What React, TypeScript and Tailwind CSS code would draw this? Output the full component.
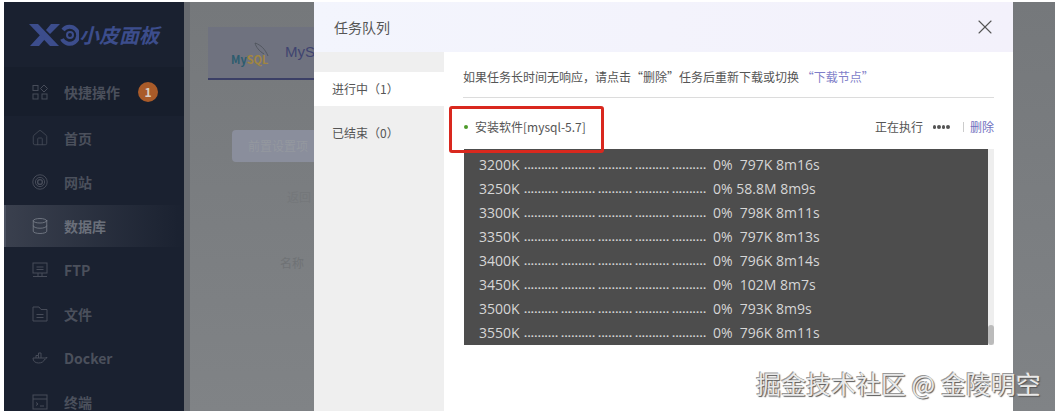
import { Database, Home, X } from 'lucide-react';
import type { ReactNode } from 'react';

const CJK = 'font-["Noto_Sans_CJK_SC","Noto_Sans",sans-serif]';

const iconClass = 'w-4 h-4 text-[#474c59]';

const QuickIcon = () => (
  <svg viewBox="0 0 16 16" className={iconClass} fill="none" stroke="currentColor" strokeWidth="1">
    <rect x="1" y="1.5" width="5" height="5" />
    <path d="M12 1l3.5 3.5L12 8 8.500 4.500z" />
    <rect x="1" y="10" width="5" height="5" />
    <rect x="10" y="10" width="5" height="5" />
  </svg>
);

const SiteIcon = () => (
  <svg viewBox="0 0 16 16" className={iconClass} fill="none" stroke="currentColor" strokeWidth="1">
    <circle cx="8" cy="8" r="7.2" />
    <circle cx="8" cy="8" r="4.6" />
    <circle cx="8" cy="8" r="2.4" strokeWidth="1.4" />
  </svg>
);

const FtpIcon = () => (
  <svg viewBox="0 0 16 16" className={iconClass} fill="none" stroke="currentColor" strokeWidth="1">
    <rect x="1" y="1" width="14" height="10" />
    <path d="M4.5 5h7M4.5 7.5h7" />
    <path d="M1 14.5h14M6 11v3.5M10 11v3.5" />
  </svg>
);

const FileIcon = () => (
  <svg viewBox="0 0 16 16" className={iconClass} fill="none" stroke="currentColor" strokeWidth="1">
    <path d="M1 1h6l2 2.5h6V15H1z" />
    <path d="M4.5 8.5h7M4.5 11.5h7" />
  </svg>
);

const DockerIcon = () => (
  <svg viewBox="0 0 16 16" className={iconClass} fill="none" stroke="currentColor" strokeWidth="1">
    <path d="M1 8h11.5c.8 0 1.500-.4 2.500-.6-.4 1.200-1.300 1.700-2.300 1.800C11.800 11.800 9.500 13 6.500 13 3 13 1 11 1 8z" />
    <path d="M4 8V5.500h2.500V8M6.500 5.500V3H9v5" />
  </svg>
);

const TerminalIcon = () => (
  <svg viewBox="0 0 16 16" className={iconClass} fill="none" stroke="currentColor" strokeWidth="1">
    <rect x="1" y="1" width="14" height="14" />
    <path d="M1 5h14M4 8.500l2 1.500-2 1.500M8 12h4" />
  </svg>
);

const LOG_LINES = [
  ['3200K', '0%  797K 8m16s'],
  ['3250K', '0% 58.8M 8m9s'],
  ['3300K', '0%  798K 8m11s'],
  ['3350K', '0%  797K 8m13s'],
  ['3400K', '0%  796K 8m14s'],
  ['3450K', '0%  102M 8m7s'],
  ['3500K', '0%  793K 8m9s'],
  ['3550K', '0%  796K 8m11s'],
];

const DOTS = '..........';

function NavItem({ icon, label, active, rowClass, children }: { icon: ReactNode; label: string; active?: boolean; rowClass: string; children?: ReactNode }) {
  return (
    <div className={`flex items-center gap-[16px] pl-[28px] ${rowClass} ${active ? 'border-l-2 border-[#4b5160] !pl-[26px] bg-gradient-to-r from-[#3a404e] to-[#1a2130]' : ''}`}>
      {icon}
      <span className={`text-sm font-bold ${active ? 'text-[#6a6f7a]' : 'text-[#4b505c]'}`}>{label}</span>
      {children}
    </div>
  );
}

export default function App() {
  return (
    <div className={`relative w-[1055px] h-[411px] overflow-hidden bg-white pt-[2px] pl-[4px] flex ${CJK}`}>
      {/* sidebar */}
      <aside className="w-[180px] h-full shrink-0 bg-[#1a2130] flex flex-col overflow-hidden">
        <div className="h-[65px] shrink-0 bg-[#1a2130] flex items-center pl-[25px]">
          <svg viewBox="0 0 50 24" className="w-[50px] h-[24px] text-[#3c4d8c]" fill="none" stroke="currentColor">
            <path d="M0 1h9l21 22h-9z" fill="currentColor" stroke="none" />
            <path d="M1 23h9l6-7-4-5zM31 1h-9l-5 6 4 4z" fill="currentColor" stroke="none" />
            <path d="M34 7a8.500 8.500 0 1 1-1 9" strokeWidth="4" />
            <circle cx="41" cy="12" r="3" strokeWidth="2" />
          </svg>
          <span className="text-[20px] leading-none font-bold italic text-[#3c4d8c] whitespace-nowrap">小皮面板</span>
        </div>
        <NavItem icon={<QuickIcon />} label="快捷操作" rowClass="h-[49px] shrink-0 bg-[#171e2c]">
          <span className="w-5 h-5 ml-[2px] rounded-full bg-[#a95b29] text-[#d9cfc6] text-xs font-bold flex items-center justify-center">1</span>
        </NavItem>
        <NavItem icon={<Home className="w-[18px] h-[18px] -mx-[1px] text-[#474c59]" strokeWidth={1.1} />} label="首页" rowClass="h-[44px] shrink-0" />
        <NavItem icon={<SiteIcon />} label="网站" rowClass="h-[44px] shrink-0" />
        <NavItem icon={<Database className="w-[18px] h-[18px] -mx-[1px] text-[#7a7f8a]" strokeWidth={1.1} />} label="数据库" active rowClass="h-[42px] my-[1px] shrink-0" />
        <NavItem icon={<FtpIcon />} label="FTP" rowClass="h-[44px] shrink-0" />
        <NavItem icon={<FileIcon />} label="文件" rowClass="h-[44px] shrink-0" />
        <NavItem icon={<DockerIcon />} label="Docker" rowClass="h-[44px] shrink-0" />
        <NavItem icon={<TerminalIcon />} label="终端" rowClass="h-[44px] shrink-0" />
      </aside>

      {/* page behind the mask */}
      <div className="w-[6px] shrink-0 bg-[#686b70]" />
      <main className="flex-1 bg-gradient-to-b from-[#75787b] to-[#808386] pl-[18px] pt-[25px] min-w-0 overflow-hidden">
        <div className="w-[300px] h-[53px] bg-[#6f727f] border-b-2 border-[#3b3f66] flex items-center pl-[23px] gap-[14px]">
          <div className="relative w-[40px] h-[24px]">
            <svg viewBox="0 0 40 24" className="absolute inset-0 text-[#4b5058]" fill="none" stroke="currentColor" strokeWidth="0.8">
              <path d="M24 2c6 2 10 6 13 13M24 2c1 4 4 8 9 11" />
            </svg>
            <span className="absolute left-0 bottom-0 text-[11px] leading-none font-bold text-[#2c5c6e]">My<span className="text-[#a1863f]">SQL</span></span>
          </div>
          <span className="text-[15px] text-[#3f4470] font-['Liberation_Sans',sans-serif]">MySQL</span>
        </div>
        <div className="ml-[24px] mt-[50px] w-[200px] h-[32px] rounded bg-[#8a8e9c] pl-[16px] text-xs leading-[32px] text-[#94989f]">前置设置项</div>
        <p className="ml-[79px] mt-[27px] text-xs text-[#74777a]">返回</p>
        <p className="ml-[72px] mt-[50px] text-xs text-[#6f7275]">名称</p>
      </main>

      {/* task dialog */}
      <section className="absolute left-[314px] top-[2px] bottom-0 w-[699px] bg-white flex flex-col">
        <header className="h-[50px] shrink-0 bg-gradient-to-r from-[#f3f5fd] to-[#f3f1fb] flex items-center justify-between pl-[20px] pr-[16px]">
          <h2 className="text-sm text-[#555]">任务队列</h2>
          <X className="w-6 h-6 text-[#555]" strokeWidth={1.1} />
        </header>
        <div className="flex-1 flex min-h-0">
          <nav className="w-[130px] shrink-0 bg-[#efefef] pt-[20px] text-xs text-[#555]">
            <div className="h-[34px] bg-white pl-[18px] leading-[34px]">进行中（1）</div>
            <div className="h-[54px] pl-[18px] leading-[54px]">已结束（0）</div>
          </nav>
          <div className="flex-1 min-w-0 pl-[19px] pr-[19px]">
            <p className="h-[46px] pt-[16px] border-b border-[#dcdcdc] text-xs leading-[18px] text-[#555] whitespace-nowrap">
              如果任务长时间无响应，请点击“删除”任务后重新下载或切换 <span className="text-[#7f7fc9]">“下载节点”</span>
            </p>
            <div className="h-[51px] pt-[7px] flex items-center text-xs text-[#555]">
              <span className="w-1 h-1 rounded-full bg-[#4d9a2a] mr-[7px] ml-px" />
              <span>安装软件[mysql-5.7]</span>
              <span className="ml-auto">正在执行</span>
              <span className="ml-[10px] flex gap-px">
                {[0, 1, 2, 3].map((i) => (
                  <span key={i} className="w-[3.5px] h-[4px] rounded-full bg-[#555]" />
                ))}
              </span>
              <span className="ml-[13px] w-px h-[10px] bg-[#ccc]" />
              <span className="ml-[6px] text-[#7070c0]">删除</span>
            </div>
            <div className="flex h-[196px] ml-[1px]">
              <div className="w-[524px] bg-[#4d4d4d] pt-[4px] pl-[15px] overflow-hidden text-[#d6d6d6] text-sm leading-6 font-['Open_Sans',sans-serif]">
                {LOG_LINES.map(([size, rest]) => (
                  <div key={size} className="flex h-6 whitespace-pre">
                    <span className="w-[45px] shrink-0">{size}</span>
                    <span className="w-[189px] shrink-0 flex gap-[3px] text-[11px] font-bold">
                      {[0, 1, 2, 3, 4].map((i) => (
                        <span key={i} className="w-[34px] overflow-hidden tracking-[0.3px]">{DOTS}</span>
                      ))}
                    </span>
                    <span>{rest}</span>
                  </div>
                ))}
              </div>
              <div className="w-[6px] bg-[#eeeeee] flex flex-col justify-end">
                <div className="h-[20px] bg-[#bbbbbb] rounded-sm" />
              </div>
            </div>
          </div>
        </div>
      </section>

      {/* annotation + watermark */}
      <div className="absolute left-[449px] top-[106px] w-[155px] h-[47px] border-[3px] border-[#d9281e] rounded-[3px]" />
      <div className="absolute left-[756px] top-[366px] text-[25px] leading-[34px] whitespace-pre text-[#e9e9e9] [text-shadow:1px_1px_1px_#555,-1px_-1px_0_#999]">掘金技术社区 @ 金陵明空</div>
    </div>
  );
}
